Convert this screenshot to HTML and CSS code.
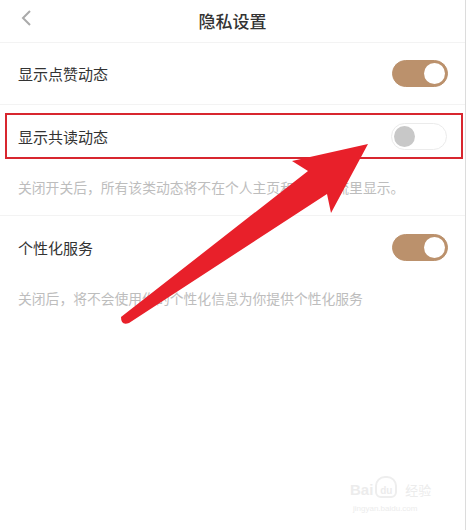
FILE: index.html
```html
<!DOCTYPE html>
<html lang="zh-CN">
<head>
  <meta charset="UTF-8">
  <meta name="viewport" content="width=device-width, initial-scale=1.0">
  <title>隐私设置</title>
  <link rel="stylesheet" href="styles.css">
</head>
<body>

<div class="page">
  <!-- Header -->
  <div class="header">
    <svg class="back" width="14" height="18" viewBox="0 0 14 18">
      <polyline points="10,2 3,9 10,16" fill="none" stroke="#aaaaaa" stroke-width="2"/>
    </svg>
    <div class="title">隐私设置</div>
  </div>

  <!-- Like activity -->
  <div class="row row-first">
    <span class="label">显示点赞动态</span>
    <span class="switch on"><span class="knob"></span></span>
  </div>

  <!-- Co-reading activity -->
  <div class="section">
    <div class="highlight">
      <div class="row row-boxed">
        <span class="label">显示共读动态</span>
        <span class="switch"><span class="knob"></span></span>
      </div>
    </div>
    <p class="desc desc-first">关闭开关后，所有该类动态将不在个人主页和书友主流里显示。</p>
  </div>

  <!-- Personalised service -->
  <div class="row row-last">
    <span class="label">个性化服务</span>
    <span class="switch on"><span class="knob"></span></span>
  </div>
  <p class="desc desc-last">关闭后，将不会使用你的个性化信息为你提供个性化服务</p>

  <!-- Watermark -->
  <div class="watermark">
    <div class="wm-top">
      <span class="wm-bai">Bai</span>
      <span class="wm-paw">du</span>
      <span class="wm-jy">经验</span>
    </div>
    <div class="wm-url">jingyan.baidu.com</div>
  </div>

  <!-- Annotation arrow -->
  <svg class="arrow" width="466" height="530" viewBox="0 0 466 530">
    <path d="M121,317 L308,171 L292,161 L368,144 L331,213 L327,194 L129,323 Q121,326 121,317 Z" fill="#e8202a"/>
  </svg>
</div>

</body>
</html>
```

FILE: styles.css
```css
body {
  margin: 0;
  background: #fff;
  font-family: "Noto Sans CJK SC", "Noto Sans", sans-serif;
  color: #333;
}

.page {
  position: relative;
  width: 465px;
  height: 530px;
  border-right: 1px solid #dcdcdc;
  overflow: hidden;
}

.header {
  height: 42px;
  border-bottom: 1px solid #f3f3f3;
  display: flex;
  align-items: center;
  justify-content: center;
  position: relative;
}

.back {
  position: absolute;
  left: 20px;
  top: 9px;
}

.title {
  font-size: 17px;
  font-weight: 500;
  color: #333;
  margin-top: -2px;
}

.row {
  display: flex;
  align-items: center;
  justify-content: space-between;
  padding: 0 17px 0 18px;
}

.label {
  font-size: 15px;
  color: #333;
}

.row-first {
  height: 61px;
  border-bottom: 1px solid #f3f3f3;
}

.section {
  border-bottom: 1px solid #f3f3f3;
}

.highlight {
  padding: 8px 2px 0 5px;
}

.row-boxed {
  height: 42px;
  border: 2px solid #d8262f;
  padding: 0 14px 0 11px;
}

.desc {
  margin: 0;
  padding: 0 18px;
  font-size: 13.8px;
  line-height: 20px;
  color: #bdbdbd;
}

.desc-first {
  padding-top: 18px;
  padding-bottom: 18px;
}

.row-last {
  height: 62px;
}

.desc-last {
  padding-top: 10px;
}

.switch {
  width: 56px;
  height: 27px;
  border-radius: 14px;
  box-sizing: border-box;
  border: 1px solid #ebebeb;
  background: #fff;
  display: flex;
  align-items: center;
  padding: 0 2px;
}

.switch .knob {
  width: 21px;
  height: 21px;
  border-radius: 50%;
  background: #c8c8c8;
}

.switch.on {
  background: #bb916c;
  border-color: #bb916c;
  justify-content: flex-end;
}

.switch.on .knob {
  background: #fff;
}

.watermark {
  position: absolute;
  left: 350px;
  top: 476px;
  color: #ececec;
  font-family: "Liberation Sans", sans-serif;
}

.wm-top {
  display: flex;
  align-items: flex-end;
  gap: 2px;
}

.wm-bai {
  font-size: 15px;
  font-weight: bold;
  line-height: 16px;
}

.wm-paw {
  width: 22px;
  height: 22px;
  border-radius: 10px 10px 6px 6px;
  border: 2px solid #eeeeee;
  box-sizing: border-box;
  font-size: 10px;
  font-weight: bold;
  display: flex;
  align-items: flex-end;
  justify-content: center;
}

.wm-jy {
  font-family: "Noto Sans CJK SC", sans-serif;
  font-size: 13px;
  line-height: 16px;
  margin-left: 6px;
}

.wm-url {
  font-size: 8px;
  margin-top: 6px;
  padding-left: 3px;
}

.arrow {
  position: absolute;
  left: 0;
  top: 0;
  pointer-events: none;
}
```
